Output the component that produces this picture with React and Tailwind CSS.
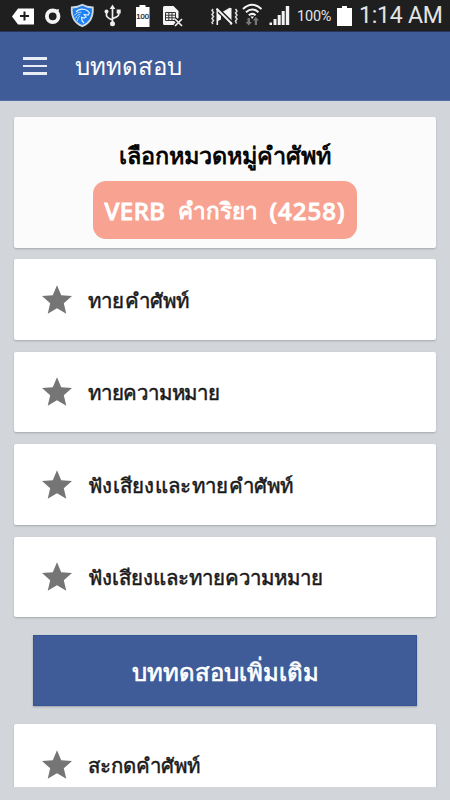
const QUIZZES = [
  { id: 'guess-word', title: 'ทายคำศัพท์', spacing: 'tracking-[0.2px]' },
  { id: 'guess-meaning', title: 'ทายความหมาย', spacing: 'tracking-[-0.2px]' },
  { id: 'listen-word', title: 'ฟังเสียงและทายคำศัพท์', spacing: 'tracking-[0.3px]' },
  { id: 'listen-meaning', title: 'ฟังเสียงและทายความหมาย', spacing: 'tracking-normal' },
];

const StatusIcons = () => (
  <svg className="w-[300px] h-8 shrink-0" viewBox="0 0 300 32" fill="none">
    {/* back tag with plus */}
    <path d="M12 16.500 18 8.500h16v16H18z" fill="#fff" />
    <path d="M24.500 11.500v9M20 16h9" stroke="#1f1f1f" strokeWidth="2" />
    {/* ring */}
    <circle cx="52.700" cy="16.300" r="5.800" stroke="#f4f4f4" strokeWidth="3.800" />
    <path d="m55 10 4-1-1 5z" fill="#f4f4f4" />
    {/* shield */}
    <path d="M82.300 4.800c3 1.800 6.300 2.600 10.500 2.700.6 9-2.300 15.300-10.500 18.700-8.200-3.400-11.100-9.700-10.500-18.700 4.200-.1 7.500-.9 10.500-2.700z" fill="#1d80f0" stroke="#cfd8e2" strokeWidth="1.800" />
    <path d="M76 12c2-2.500 5.500-3.500 9-2.500 2 .5 3.500 1.800 4.500 3.500l-1.500 2.200-3.800-.7 1.800 2.500-2.200 1-2.300-.8c-.3 2.500 1 4.500 2.500 6" stroke="#dcecff" strokeWidth="1.200" />
    <path d="M74.500 15.500c1.500-2.500 4-3.300 7-3.300M75.500 18.500c1-2.800 2.500-3.800 5-4.200M77.500 21c0-2.500 1-4 2.500-5" stroke="#dcecff" strokeWidth="0.800" />
    {/* usb */}
    <path d="M112.500 8v15M106.500 12v3.500q0 2 6 4.500M118.700 12v2.500q0 2-6 4" stroke="#eee" strokeWidth="1.700" />
    <path d="m112.500 4.500 2.800 4.500h-5.600z" fill="#eee" />
    <circle cx="112.500" cy="23.700" r="2.500" fill="#eee" />
    <circle cx="106.500" cy="11.500" r="2" fill="#eee" />
    <path d="M116.700 9.500h4v4h-4z" fill="#eee" />
    {/* battery 100 */}
    <path d="M139.500 5h6v2h4v20h-13.500V7h3.500z" fill="#fff" />
    <text x="142.700" y="19" textAnchor="middle" fontSize="7.600" fill="#111" stroke="#111" strokeWidth="0.200" fontFamily="Liberation Sans, sans-serif">100</text>
    {/* sim with cross */}
    <path d="M164.500 6h9l5 5v7l-3 3 1 4h-12q-1.500 0-1.500-1.500V7.500q0-1.500 1.500-1.500z" fill="#f4f4f4" />
    <path d="M165.500 12.500h10v8h-10zM165.500 15.200h10M165.500 17.800h10M168.800 12.500v8M172 12.500v8" stroke="#333" strokeWidth="1" />
    <path d="m175 19 7 7M182 19l-7 7" stroke="#1f1f1f" strokeWidth="4" />
    <path d="m175 19 7 7M182 19l-7 7" stroke="#eee" strokeWidth="1.700" />
    {/* vibrate, muted */}
    <path d="m213 9-1 1.500 1.500 2-1.500 2 1.500 2-1.500 2 1.500 2-1.500 2 1 1.500M235.500 9l1.500 2-1.500 2 1.500 2-1.500 2 1.500 2-1.500 2 1 2.500" stroke="#ddd" strokeWidth="1.500" />
    <path d="M217 12.500v9l4-2v-3.500zM221.500 12.500 230 7.500v12z" fill="#f4f4f4" />
    <path d="M230.700 8v16.500M217.300 9v16" stroke="#f4f4f4" strokeWidth="1.600" />
    <path d="m219 10.500 12 12" stroke="#1f1f1f" strokeWidth="4" />
    <path d="m216.500 8.500 15.500 15.500" stroke="#f4f4f4" strokeWidth="1.800" />
    {/* wifi */}
    <path d="M243 9q9-8.500 18.500 0M246 12.200q6.200-5.500 12.400 0M248.800 15.200q3.400-2.600 6.800 0" stroke="#f4f4f4" strokeWidth="2" />
    <path d="M250.500 16.500h3.500l-1.800 2.500z" fill="#f4f4f4" />
    <path d="M247.500 18h2.500v4h2l-3.200 3.500-3.300-3.500h2zM254.800 25v-4.500h-2l3-3.500 3.200 3.500h-2V25z" fill="#777" />
    {/* signal bars */}
    <path d="M269.500 22.500h2.500V25h-2.500zM273.500 19h3v6h-3zM277.700 15h3v10h-3zM281.700 11h3v14h-3zM285.800 6h3.400v19h-3.400z" fill="#f4f4f4" />
  </svg>
);

const StatusBar = () => (
  <div className="h-8 bg-[#1f1f1f] border-b border-[#27355a] flex items-center overflow-hidden text-white font-['Roboto',sans-serif]">
    <StatusIcons />
    <span className="w-[33px] ml-[-3px] mr-[7px] pt-[3px] text-[14.500px] leading-8 tracking-[-0.2px] text-[#e4e4e4] whitespace-nowrap">100%</span>
    <svg className="w-[15px] h-5 shrink-0" viewBox="0 0 15 20">
      <path d="M5 0h5v2h5v18H0V2h5z" fill="#fff" />
    </svg>
    <span className="ml-[7px] pt-px text-[23px] leading-8 tracking-[-0.200px] text-[#e4e4e4] whitespace-nowrap">1:14 AM</span>
  </div>
);

const AppBar = () => (
  <header className="h-[69px] bg-[#3f5c99] border-b border-[#536da6] flex items-center pl-[23px]">
    <div className="w-6 flex flex-col gap-[5px]">
      <span className="h-[2.500px] bg-[#e8ecf5]" />
      <span className="h-[2.500px] bg-[#e8ecf5]" />
      <span className="h-[2.500px] bg-[#e8ecf5]" />
    </div>
    <h1 className="ml-[28px] text-[24px] leading-8 text-white whitespace-nowrap">บททดสอบ</h1>
  </header>
);

const QuizCard = ({ title, spacing = 'tracking-normal' }) => (
  <div className="h-[80.500px] shrink-0 bg-white rounded-[2px] shadow-[0_1px_2px_rgba(0,0,0,0.22)] flex items-center pl-[28px]">
    <svg className="w-[30px] h-[29px] shrink-0" viewBox="2 2 20 19">
      <path d="M12 17.270 18.180 21l-1.640-7.030L22 9.240l-7.190-.61L12 2 9.190 8.630 2 9.240l5.460 4.730L5.820 21z" fill="#757575" />
    </svg>
    <span className={`ml-4 pt-px text-[20.400px] leading-8 text-[#191919] [-webkit-text-stroke:0.5px_#191919] whitespace-nowrap ${spacing}`}>{title}</span>
  </div>
);

const App = () => (
  <div className="w-[450px] h-[800px] overflow-hidden bg-[#d2d6db] font-['Noto_Sans',sans-serif]">
    <StatusBar />
    <AppBar />
    <main className="h-[686px] overflow-hidden px-[14px] pt-4 flex flex-col">
      <section className="h-[130.500px] shrink-0 bg-[#fbfbfb] rounded-[2px] shadow-[0_1px_2px_rgba(0,0,0,0.22)] flex flex-col items-center pt-[22px]">
        <h2 className="h-8 text-[23.400px] leading-8 text-black [-webkit-text-stroke:0.8px_black] whitespace-nowrap">เลือกหมวดหมู่คำศัพท์</h2>
        <button className="mt-[10px] pt-0.5 w-[264px] h-[58px] shrink-0 rounded-[13px] bg-[#f8a291] text-white text-[24px] font-medium [-webkit-text-stroke:0.9px_white] flex justify-center items-center gap-3 whitespace-nowrap">
          <span className="tracking-[0.5px]">VERB</span>
          <span className="text-[22.500px]">คำกริยา</span>
          <span className="tracking-[1px]">(4258)</span>
        </button>
      </section>
      <div className="mt-[11.500px] flex flex-col gap-3">
        {QUIZZES.map(quiz => (
          <QuizCard key={quiz.id} title={quiz.title} spacing={quiz.spacing} />
        ))}
      </div>
      <button className="mt-[18px] mb-[18px] mx-[19px] pt-0.5 h-[71px] shrink-0 bg-[#3f5c99] border border-[#345594] shadow-[0_1px_2px_rgba(0,0,0,0.25)] text-white text-[23.900px] [-webkit-text-stroke:0.7px_white] whitespace-nowrap">
        บททดสอบเพิ่มเติม
      </button>
      <QuizCard title="สะกดคำศัพท์" />
    </main>
  </div>
);

export default App;
